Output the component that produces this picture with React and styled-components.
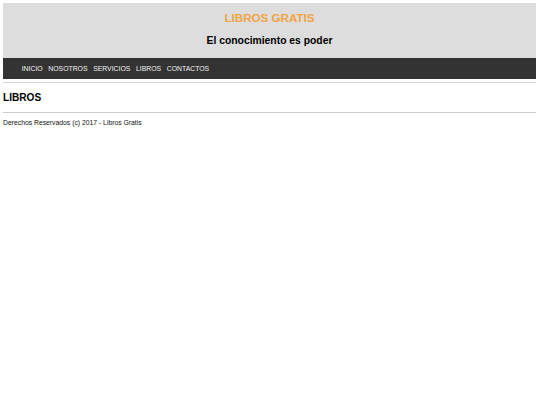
import React from "react";
import styled, { createGlobalStyle } from "styled-components";

const Global = createGlobalStyle`
  html, body { margin: 0; padding: 0; background: #fff; }
  body { font-family: "Liberation Sans", Arial, sans-serif; color: #000; }
`;

const Page = styled.div`
  padding: 3px 4px 0 3px;
`;

const Header = styled.header`
  background: #dddddd;
  height: 55px;
  box-sizing: border-box;
  padding-top: 7.6px;
  text-align: center;
`;

const Title = styled.h1`
  margin: 0;
  font-size: 11.6px;
  line-height: 14px;
  font-weight: bold;
  color: #f2a444;
`;

const Subtitle = styled.h2`
  margin: 10.2px 0 0;
  font-size: 10.35px;
  line-height: 12px;
  font-weight: bold;
  color: #000;
`;

const Nav = styled.nav`
  background: #333333;
  height: 21px;
  display: flex;
  align-items: center;
  gap: 5.7px;
  padding-left: 18.7px;
`;

const NavLink = styled.a`
  color: #f4f4f4;
  font-size: 6.85px;
  line-height: 21px;
  text-decoration: none;
`;

const Rule = styled.hr`
  margin: ${(p) => p.$top}px 0 0;
  border: 0;
  height: 1px;
  background: ${(p) => p.$color};
`;

const Section = styled.h3`
  margin: 9px 0 0;
  font-size: 10.1px;
  line-height: 12px;
  font-weight: bold;
`;

const Footer = styled.footer`
  margin-top: 6px;
  font-size: 6.8px;
  line-height: 8px;
  color: #111;
`;

const links = ["INICIO", "NOSOTROS", "SERVICIOS", "LIBROS", "CONTACTOS"];

export default function App() {
  return (
    <>
      <Global />
      <Page>
        <Header>
          <Title>LIBROS GRATIS</Title>
          <Subtitle>El conocimiento es poder</Subtitle>
        </Header>
        <Nav>
          {links.map((l) => (
            <NavLink key={l} href="#">
              {l}
            </NavLink>
          ))}
        </Nav>
        <Rule $top={3} $color="#d8d8d8" />
        <Section>LIBROS</Section>
        <Rule $top={8} $color="#cccccc" />
        <Footer>Derechos Reservados (c) 2017 - Libros Gratis</Footer>
      </Page>
    </>
  );
}
